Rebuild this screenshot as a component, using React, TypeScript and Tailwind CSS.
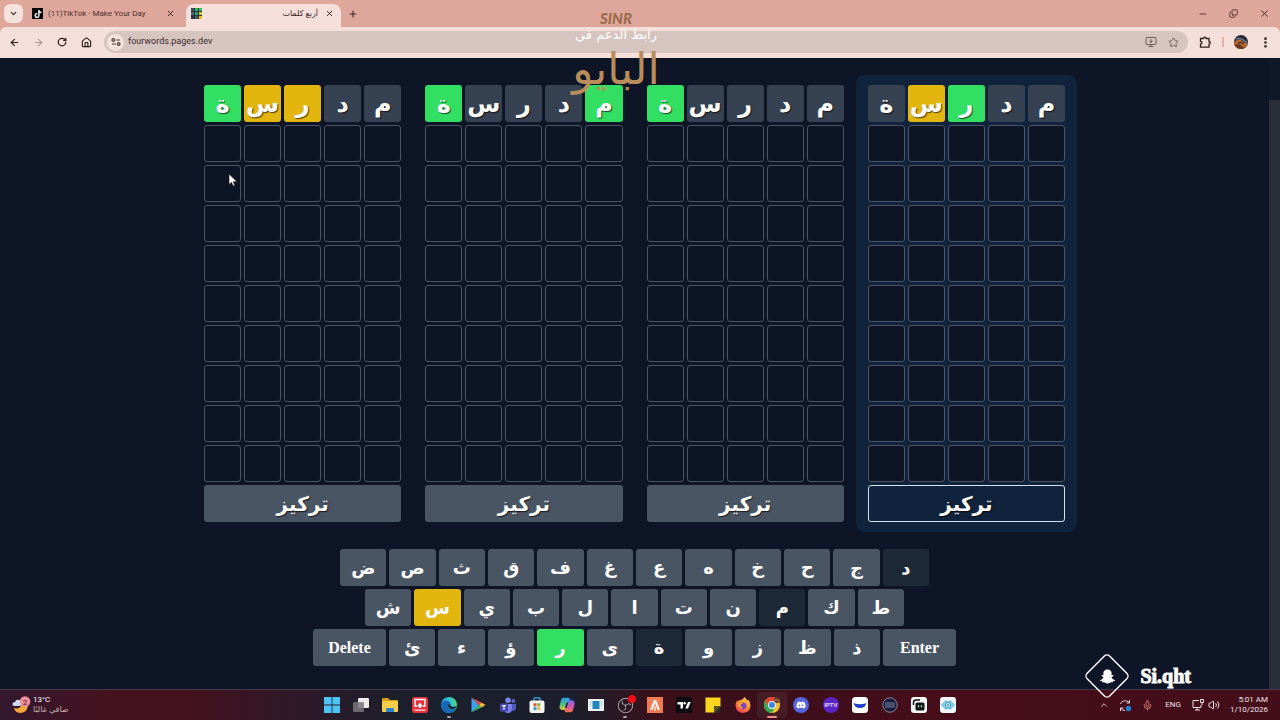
import type { ReactNode } from "react";
import clsx from "clsx";
import {
  ArrowLeft,
  ArrowRight,
  ChevronDown,
  ChevronUp,
  Copy,
  EllipsisVertical,
  House,
  Mic,
  Minus,
  MonitorDown,
  Plus,
  RotateCw,
  Star,
  Volume2,
  X,
} from "lucide-react";
import { FaDiscord, FaSnapchatGhost, FaTiktok } from "react-icons/fa";
import { SiObsstudio } from "react-icons/si";

type State = "correct" | "present" | "absent" | "unused";

const WORD = ["م", "د", "ر", "س", "ة"];
const EMPTY_ROWS = 9;

// Listed from the right, the way the boards are read
const BOARDS: { id: number; active?: boolean; result: State[] }[] = [
  { id: 1, active: true, result: ["absent", "absent", "correct", "present", "absent"] },
  { id: 2, result: ["absent", "absent", "absent", "absent", "correct"] },
  { id: 3, result: ["correct", "absent", "absent", "absent", "correct"] },
  { id: 4, result: ["absent", "absent", "present", "present", "correct"] },
];

const KEY_ROWS = [
  { pad: "px-[27px]", keys: ["د", "ج", "ح", "خ", "ه", "ع", "غ", "ف", "ق", "ث", "ص", "ض"] },
  { pad: "px-[52px]", keys: ["ط", "ك", "م", "ن", "ت", "ا", "ل", "ب", "ي", "س", "ش"] },
  {
    pad: "px-0",
    keys: ["Enter", "ذ", "ظ", "ز", "و", "ة", "ى", "ر", "ؤ", "ء", "ئ", "Delete"],
  },
];

const KEY_STATE: Record<string, State> = {
  د: "absent",
  م: "absent",
  ة: "absent",
  س: "present",
  ر: "correct",
};

const cellColor: Record<State, string> = {
  correct: "bg-[#33df62]",
  present: "bg-[#e2b60f]",
  absent: "bg-[#364152]",
  unused: "border border-[#4a5566] bg-[#0d1424]",
};

const keyColor: Record<State, string> = {
  correct: "bg-[#33df62]",
  present: "bg-[#e2b60f]",
  absent: "bg-[#1e2938]",
  unused: "bg-[#4a5564]",
};

const arabic = "font-['DejaVu_Sans',sans-serif]";
const ui = "font-[Roboto,'DejaVu_Sans',sans-serif]";
const letterShadow = "[text-shadow:1px_1px_1px_#000a]";

function Favicon() {
  return (
    <svg viewBox="0 0 11 11" className="size-[11px] shrink-0" aria-hidden="true">
      <rect width="11" height="11" fill="#26323c" />
      <rect width="3" height="3" fill="#35535c" />
      <rect x="4" width="3" height="3" fill="#2fb56e" />
      <rect x="8" width="3" height="3" fill="#39b96b" />
      <rect y="4" width="3" height="3" fill="#4c6c76" />
      <rect x="4" y="4" width="3" height="3" fill="#25a070" />
      <rect x="8" y="4" width="3" height="3" fill="#d9c52b" />
      <rect x="4" y="8" width="3" height="3" fill="#3e5b64" />
      <rect x="8" y="8" width="3" height="3" fill="#e3bf20" />
    </svg>
  );
}

function IconButton({ label, children }: { label: string; children: ReactNode }) {
  return (
    <button aria-label={label} className="flex h-6 w-6 shrink-0 items-center justify-center">
      {children}
    </button>
  );
}

function TabStrip() {
  return (
    <div className="flex h-[27px] items-end bg-[#dfa69b] pl-1 text-[#3b2320]">
      <button
        aria-label="Search tabs"
        className="mb-1 flex size-[19px] items-center justify-center rounded-md bg-[#f5e2dd]"
      >
        <ChevronDown className="size-[9px]" strokeWidth={3} />
      </button>
      <div className="flex h-[23px] w-[163px] items-center gap-[5px] pb-1 pl-[9px] pr-1">
        <span className="flex size-[11px] shrink-0 items-center justify-center bg-black text-white">
          <FaTiktok className="size-[8px]" />
        </span>
        <span className="min-w-0 flex-1 whitespace-nowrap text-[8px] text-[#4d302c]">
          (11)TikTok - Make Your Day
        </span>
        <button aria-label="Close tab" className="flex h-4 w-6 items-center justify-center">
          <X className="size-[9px]" strokeWidth={2.5} />
        </button>
      </div>
      <div className="flex h-[23px] w-[155px] items-center rounded-t-lg bg-[#f4dfda] pb-1 pl-[5px]">
        <Favicon />
        <span dir="rtl" className="flex-1 whitespace-nowrap text-[8px]">
          أربع كلمات
        </span>
        <button aria-label="Close tab" className="flex h-4 w-[23px] items-center justify-center">
          <X className="size-[9px]" strokeWidth={2.5} />
        </button>
      </div>
      <button aria-label="New tab" className="flex h-[27px] w-6 items-center justify-center">
        <Plus className="size-[10px]" strokeWidth={2.5} />
      </button>
      <div className="ml-auto flex h-[27px] items-center">
        <button aria-label="Minimize" className="flex w-[31px] justify-center">
          <Minus className="size-[10px]" />
        </button>
        <button aria-label="Restore" className="flex w-[31px] justify-center">
          <Copy className="size-[9px] -scale-y-100" />
        </button>
        <button aria-label="Close" className="flex w-[31px] justify-center">
          <X className="size-[11px]" />
        </button>
      </div>
    </div>
  );
}

function Toolbar() {
  return (
    <div className="flex h-[31px] items-center rounded-t-md bg-[#f4dfda] pb-px pl-0.5 pr-[3px] text-[#2f1f1d]">
      <IconButton label="Back">
        <ArrowLeft className="size-[11px]" strokeWidth={2.5} />
      </IconButton>
      <IconButton label="Forward">
        <ArrowRight className="size-[11px] text-[#ae9a96]" strokeWidth={2.5} />
      </IconButton>
      <IconButton label="Reload">
        <RotateCw className="size-[10px]" strokeWidth={3} />
      </IconButton>
      <IconButton label="Home">
        <House className="size-[11px]" strokeWidth={2.5} />
      </IconButton>
      <div className="ml-1.5 mr-[5px] flex h-[22px] flex-1 items-center rounded-full bg-[#d6c4c0] pl-[3px] pr-1">
        <button
          aria-label="Site information"
          className="flex size-[17px] items-center justify-center rounded-full bg-[#f2e1dd]"
        >
          <svg viewBox="0 0 10 8" className="w-[10px]" fill="none" stroke="#4b3b39" strokeWidth="1.2">
            <circle cx="2.3" cy="2" r="1.3" />
            <path d="M5 2h4M1 6h4" />
            <circle cx="7.7" cy="6" r="1.3" />
          </svg>
        </button>
        <input
          aria-label="Address"
          defaultValue="fourwords.pages.dev"
          className="min-w-0 flex-1 bg-transparent pl-1 text-[9px] text-[#3b2b29] outline-none"
        />
        <button aria-label="Install app" className="flex w-[22px] justify-center text-[#6d5b58]">
          <MonitorDown className="size-[12px]" />
        </button>
        <button aria-label="Bookmark" className="flex w-[22px] justify-center text-[#6d5b58]">
          <Star className="size-[11px]" />
        </button>
      </div>
      <IconButton label="Extensions">
        <svg viewBox="0 0 12 12" className="size-[12px]" fill="none" stroke="currentColor" strokeWidth="1.3">
          <path d="M1.500 2.500h3a1.300 1.300 0 0 1 2.600 0H10v3a1.300 1.300 0 0 1 0 2.600v3H1.500V8.200a1.400 1.400 0 0 0 0-2.800z" />
        </svg>
      </IconButton>
      <span className="mx-[5px] h-[10px] w-0.5 bg-[#e3b3aa]" />
      <IconButton label="Profile">
        <svg viewBox="0 0 14 14" className="size-[14px] overflow-hidden rounded-full">
          <rect width="14" height="14" fill="#2b2a33" />
          <path d="M0 7q5-4 8-1t6 2v6H0z" fill="#b26a35" />
          <path d="M2 4q5-2 11 4" stroke="#6f7d92" strokeWidth="1.5" fill="none" />
          <path d="M4 8q3-1.500 6 1" stroke="#2a1c1c" strokeWidth="1" fill="none" />
          <path d="M0 10q6-2 8 1t5 0v3H0z" fill="#6b3722" />
        </svg>
      </IconButton>
      <IconButton label="Menu">
        <EllipsisVertical className="size-[13px]" strokeWidth={3} />
      </IconButton>
    </div>
  );
}

function Board({ result, active }: { result: State[]; active?: boolean }) {
  return (
    <section className={clsx("flex-1 rounded-lg px-3 py-[10px]", active && "bg-[#11223d]")}>
      <div className="grid grid-cols-5 gap-[3px]">
        {WORD.map((letter, i) => (
          <div
            key={i}
            className={clsx(
              "flex h-[37px] items-center justify-center rounded-[3px] text-2xl leading-6 font-bold text-white",
              letterShadow,
              cellColor[result[i]]
            )}
          >
            {letter}
          </div>
        ))}
        {Array.from({ length: EMPTY_ROWS * 5 }, (_, i) => (
          <div key={i} className={clsx("h-[37px] rounded-[3px]", cellColor.unused)} />
        ))}
      </div>
      <button
        className={clsx(
          "mt-[3px] flex h-[37px] w-full items-center justify-center rounded-[3px] text-xl font-bold text-white",
          letterShadow,
          active ? "border border-[#d3e2f0] bg-[#11223d]" : "bg-[#4a5564]"
        )}
      >
        تركيز
      </button>
    </section>
  );
}

function Keyboard() {
  return (
    <div className="mx-auto mt-[17px] flex w-full max-w-[643px] flex-col gap-[3px]">
      {KEY_ROWS.map((row) => (
        <div key={row.pad} className={clsx("flex gap-[3px]", row.pad)}>
          {row.keys.map((key) => (
            <button
              key={key}
              className={clsx(
                "flex h-[37px] items-center justify-center rounded-[3px] font-bold text-white",
                key.length > 1
                  ? "w-[73px] font-['Liberation_Serif',serif] text-base"
                  : "flex-1 text-lg",
                keyColor[KEY_STATE[key] ?? "unused"]
              )}
            >
              {key}
            </button>
          ))}
        </div>
      ))}
    </div>
  );
}

function Watermark() {
  return (
    <div
      className={clsx(
        "pointer-events-none absolute left-[566px] top-[10px] flex w-[100px] flex-col items-center whitespace-nowrap",
        arabic
      )}
    >
      <span className="font-['Lato',sans-serif] text-[15px] font-black italic leading-4 text-[#9b6b4b]">
        SINR
      </span>
      <span dir="rtl" className="text-[13px] leading-[18px] text-white">
        رابط الدعم في
      </span>
      <span dir="rtl" className="text-[44px] leading-[50px] text-[#b88d5b]">
        البايو
      </span>
    </div>
  );
}

function SnapTag() {
  return (
    <div className="pointer-events-none absolute bottom-[21px] right-[89px] flex items-center gap-2.5 text-white">
      <span className="relative flex size-[46px] items-center justify-center">
        <svg viewBox="0 0 46 46" className="absolute inset-0" fill="none" stroke="white" strokeWidth="1.4">
          <rect x="7" y="7" width="32" height="32" rx="4" transform="rotate(45 23 23)" />
        </svg>
        <FaSnapchatGhost className="size-[15px]" />
      </span>
      <span className="font-['Liberation_Serif',serif] text-xl font-bold [-webkit-text-stroke:1px_white]">
        Si.qht
      </span>
    </div>
  );
}

function Glyph({ children }: { children: ReactNode }) {
  return (
    <svg viewBox="0 0 16 16" className="size-4">
      {children}
    </svg>
  );
}

const APPS: { name: string; icon: ReactNode; open?: boolean; focused?: boolean }[] = [
  {
    name: "Start",
    icon: (
      <Glyph>
        <path d="M0 0h7.6v7.6H0zM8.4 0H16v7.6H8.4zM0 8.4h7.6V16H0zM8.4 8.4H16V16H8.4z" fill="#4cc3f5" />
      </Glyph>
    ),
  },
  {
    name: "Task view",
    icon: (
      <Glyph>
        <rect x="5" y="1" width="11" height="10" rx="1" fill="#ececef" />
        <rect y="5" width="11" height="10" rx="1" fill="#77777c" opacity=".85" />
      </Glyph>
    ),
  },
  {
    name: "File Explorer",
    icon: (
      <Glyph>
        <path d="M0 2q0-1 1-1h5l2 2h7q1 0 1 1v4H0z" fill="#d99a1c" />
        <rect y="4" width="16" height="11" rx="1" fill="#f9cf4a" />
        <path d="M4 15v-3q0-1 1-1h6q1 0 1 1v3z" fill="#2b83cf" />
      </Glyph>
    ),
  },
  {
    name: "Screen recorder",
    icon: (
      <Glyph>
        <rect width="16" height="16" rx="2.5" fill="#e5323f" />
        <path d="M5 9H3V2.500h10V9h-2" fill="none" stroke="white" strokeWidth="1.4" />
        <path d="M8 5.500l3 4H9V11H7V9.500H5z" fill="white" />
        <path d="M2.500 13.200h11" stroke="#ffc6c6" strokeWidth="1.5" />
      </Glyph>
    ),
  },
  {
    name: "Edge",
    open: true,
    icon: (
      <Glyph>
        <defs>
          <linearGradient id="edgeTop" x1="0" x2="1" y1=".5" y2="0.2">
            <stop offset="0" stopColor="#249de6" />
            <stop offset=".6" stopColor="#2fc4cf" />
            <stop offset="1" stopColor="#5edb6b" />
          </linearGradient>
        </defs>
        <circle cx="8" cy="8" r="8" fill="url(#edgeTop)" />
        <path d="M0 8q1-4.500 5.500-4.500Q9 4 9.500 7q-2-.5-2.500 1.500Q7 11.500 11 12q2.500 0 4-1.500Q13 16 8 16 0 15.500 0 8z" fill="#1667b7" />
        <path d="M9.500 7q-2.300-.3-2.500 1.500.3 3 4 3.500 2.500 0 4-1.500l.8-1.500q-1.800 1-4.300.7Q8.700 9 9.500 7z" fill="#1c2431" />
      </Glyph>
    ),
  },
  {
    name: "Google Play",
    icon: (
      <Glyph>
        <path d="M1.500 .8L9 8l-7.500 7.200z" fill="#3fa1f2" />
        <path d="M1.500 .8L11.500 5.600 9 8z" fill="#e94a43" />
        <path d="M1.500 15.200L9 8l2.500 2.400z" fill="#3ebd63" />
        <path d="M11.500 5.600L15.500 8l-4 2.400L9 8z" fill="#f7bf30" />
      </Glyph>
    ),
  },
  {
    name: "Teams",
    icon: (
      <Glyph>
        <circle cx="8" cy="3.200" r="2.800" fill="#7c83ea" />
        <circle cx="13.300" cy="4" r="2" fill="#5c63cf" />
        <path d="M4 7h8v5q0 4-4 4t-4-4z" fill="#7b7fe6" />
        <path d="M12 7h4v4q0 3-4 3z" fill="#5158c2" />
        <rect y="6.500" width="8" height="8" rx="1" fill="#4648b4" />
        <path d="M2.200 8.700h3.600M4 8.700v4" stroke="white" strokeWidth="1.200" />
      </Glyph>
    ),
  },
  {
    name: "Microsoft Store",
    icon: (
      <Glyph>
        <path d="M5 5V1.500q0-.7.7-.7h4.600q.7 0 .7.7V5" fill="none" stroke="#3aa7e8" strokeWidth="1.300" />
        <rect x=".5" y="3.500" width="15" height="12.500" rx="2" fill="#f4f4f6" />
        <path d="M4.500 6.300h3v3h-3z" fill="#e8502f" />
        <path d="M8.300 6.300h3v3h-3z" fill="#79b82e" />
        <path d="M4.500 10.100h3v3h-3z" fill="#2f9fe4" />
        <path d="M8.300 10.100h3v3h-3z" fill="#f5b92d" />
      </Glyph>
    ),
  },
  {
    name: "Copilot",
    icon: (
      <Glyph>
        <defs>
          <linearGradient id="copilotLeft" x1="0" x2="0" y1="0" y2="1">
            <stop offset="0" stopColor="#2c9be8" />
            <stop offset=".55" stopColor="#48c07a" />
            <stop offset="1" stopColor="#eec33a" />
          </linearGradient>
          <linearGradient id="copilotRight" x1="0" x2="0" y1="0" y2="1">
            <stop offset="0" stopColor="#6a6cf0" />
            <stop offset=".5" stopColor="#d457b0" />
            <stop offset="1" stopColor="#f4734a" />
          </linearGradient>
        </defs>
        <path d="M4.500 .8h5q1.700 0 1.200 1.800L7.500 11.500q-.5 1.500-2 1.500H3Q0 12.500 .6 9L2 3q.5-2.200 2.500-2.200z" fill="url(#copilotLeft)" />
        <path d="M9.500 .8q1.700 0 2.200 1.700L12 3.500h-1.500z" fill="#3a5ae0" />
        <path d="M13 3.300q3 .3 2.500 4L14 13q-.6 2.200-2.500 2.200H7q-1.700 0-1.200-1.700L8.600 5q.6-1.700 2.200-1.700z" fill="url(#copilotRight)" />
        <path d="M8.500 5.500l-1.800 5.500" stroke="#241a2c" strokeWidth="1.400" />
      </Glyph>
    ),
  },
  {
    name: "Media viewer",
    icon: (
      <Glyph>
        <rect y="2" width="16" height="12" fill="#eef3f6" />
        <rect x="4.500" y="4" width="7" height="8" fill="#1f87bd" />
        <path d="M2.500 4v6M13.500 4v6" stroke="#c6d4dc" strokeWidth="1.500" />
      </Glyph>
    ),
  },
  {
    name: "OBS Studio",
    open: true,
    icon: (
      <span className="relative flex size-4 items-center justify-center text-[#cfcfd2]">
        <SiObsstudio className="size-[15px]" />
        <span className="absolute -right-[3px] -top-0.5 size-2 rounded-full bg-[#f40b16]" />
      </span>
    ),
  },
  {
    name: "Launcher",
    icon: (
      <Glyph>
        <rect width="16" height="16" fill="#f07b52" />
        <path d="M3 13L6.800 3h2.400L13 13h-2.500L8 6l-2.500 7z" fill="#fff0e8" />
        <path d="M8 9v5" stroke="#fff0e8" strokeWidth="1.300" />
      </Glyph>
    ),
  },
  {
    name: "TradingView",
    icon: (
      <Glyph>
        <rect width="16" height="16" rx="1.500" fill="#0c0c0f" />
        <path d="M1.500 5h5.500v6.500H4.500V7.500h-3z" fill="white" />
        <circle cx="8.700" cy="6.200" r="1.200" fill="white" />
        <path d="M12 5h2.800l-2.800 6.500H9.300z" fill="white" />
      </Glyph>
    ),
  },
  {
    name: "Sticky Notes",
    icon: (
      <Glyph>
        <path d="M.5 .5h15v9L9.500 15.500h-9z" fill="#fbd51d" />
        <path d="M15.500 9l-6.500 6.500V9z" fill="#54501f" />
        <path d="M15.500 9v6.500H9z" fill="#2e2a23" />
      </Glyph>
    ),
  },
  {
    name: "Firefox",
    icon: (
      <Glyph>
        <defs>
          <linearGradient id="fox" x1=".8" x2=".2" y1="0" y2="1">
            <stop offset="0" stopColor="#ffda3c" />
            <stop offset=".5" stopColor="#ff8a2b" />
            <stop offset="1" stopColor="#f0335e" />
          </linearGradient>
        </defs>
        <path d="M9.500 0q2 1.500 2.500 3.500l1-1q2.500 2.500 2.500 6-.5 7-7.500 7.500-7-.5-7.500-7.500 0-3 2-5.500l.3 1.500Q4.500 2.500 6 3q2-.5 3.500-3z" fill="url(#fox)" />
        <circle cx="8" cy="8.800" r="3.400" fill="#7b43c9" />
        <path d="M3 6q3-2 5 .5-2.500 0-2.500 2 .5 2 3 2-3 2-5-.5Q2.500 8 3 6z" fill="#ffa02c" />
      </Glyph>
    ),
  },
  {
    name: "Chrome",
    open: true,
    focused: true,
    icon: (
      <Glyph>
        <circle cx="8" cy="8" r="8" fill="#f5c32c" />
        <path d="M1.100 4A8 8 0 0 1 14.900 4L15 4.500H8L4.500 10z" fill="#e24435" />
        <path d="M1.100 4A8 8 0 0 0 7.500 16L11.500 10 8 11.500 4.500 10z" fill="#32a753" />
        <circle cx="8" cy="8" r="3.900" fill="white" />
        <circle cx="8" cy="8" r="3" fill="#3b82ec" />
        <circle cx="13" cy="3" r="3" fill="#5b3a2e" />
        <path d="M10.500 3.500q2.500-1.500 5 .8" stroke="#bf7b45" strokeWidth="1.200" fill="none" />
      </Glyph>
    ),
  },
  {
    name: "Discord",
    icon: (
      <span className="flex size-4 items-center justify-center rounded-full bg-[#5563dd] text-white">
        <FaDiscord className="size-[10px]" />
      </span>
    ),
  },
  {
    name: "IPTV",
    icon: (
      <span className="flex size-4 items-center justify-center rounded-full bg-[#5a23c4] text-[6px] font-bold leading-none text-[#e4d8ff]">
        IPTV
      </span>
    ),
  },
  {
    name: "Smile",
    icon: (
      <Glyph>
        <rect width="16" height="16" rx="3.500" fill="white" />
        <path d="M1.500 5.500q1 1.500 6.500 1.700 5.500-.2 6.500-1.700Q13.500 11 8 11T1.500 5.500z" fill="#1e3fd0" />
      </Glyph>
    ),
  },
  {
    name: "Radio",
    icon: (
      <Glyph>
        <circle cx="8" cy="8" r="7.200" fill="#151b38" stroke="#8b8796" strokeWidth="1" />
        <path d="M3 6h10M3 8h10M3 10h10" stroke="#7c86a6" strokeWidth="1.200" />
      </Glyph>
    ),
  },
  {
    name: "Stream bot",
    icon: (
      <Glyph>
        <rect width="16" height="16" rx="3" fill="#f7faf9" />
        <rect x="4.500" y="5.500" width="9" height="8" rx="1.500" fill="#111" />
        <path d="M2.500 8V5.500q0-2.500 2.500-2.500h4" fill="none" stroke="#111" strokeWidth="1.500" />
        <path d="M7.500 8v2.500M10.500 8v2.500" stroke="#5ce0b8" strokeWidth="1.200" />
      </Glyph>
    ),
  },
  {
    name: "Remote",
    icon: (
      <Glyph>
        <rect width="16" height="16" rx="3" fill="#eef8fd" />
        <path d="M1.500 8L6 3.500 8 5.500 10 3.500 14.500 8 10 12.500 8 10.500 6 12.500z" fill="#8ed3ee" stroke="#3aa4d3" strokeWidth=".8" />
        <circle cx="8" cy="8" r="2.600" fill="#dff4fc" stroke="#2e8fc2" strokeWidth="1" />
        <circle cx="8" cy="8" r="1" fill="#2e8fc2" />
      </Glyph>
    ),
  },
];

function Taskbar() {
  return (
    <footer className="grid h-[31px] shrink-0 grid-cols-[1fr_646px_1fr] border-t border-[#443848] bg-[linear-gradient(90deg,#33182e_0%,#46111f_9%,#43111f_15%,#2a1a29_25%,#1a202c_33%,#1c1f2b_45%,#3c1019_52%,#3a101c_58%,#470d1a_75%,#430d1a_100%)] text-white">
      <button className="flex items-center gap-0.5 pl-3 text-left">
        <svg viewBox="0 0 19 19" className="size-[19px]">
          <path d="M10 7q5 2 6-2 1 11-7 12-6 0-7-5 7 2 8-5z" fill="#f5a73a" />
          <path d="M2 10q-2-.5-1.500-2.500Q1 6 3 6q1-3 4-2 3 0 3 3 0 3-3 3z" fill="#cfdcf5" />
          <circle cx="13" cy="5.500" r="5.300" fill="#f08f9c" />
          <text x="13" y="8.500" fontSize="8" textAnchor="middle" fill="#3a1520">
            2
          </text>
        </svg>
        <span className="flex flex-col text-[8px] leading-[10px]">
          <span>13°C</span>
          <span dir="rtl" className="text-[#c4aab0]">
            صافي غالبًا
          </span>
        </span>
      </button>
      <nav className="flex" aria-label="Apps">
        {APPS.map((app) => (
          <button
            key={app.name}
            aria-label={app.name}
            className={clsx(
              "relative my-0.5 flex flex-1 items-center justify-center rounded",
              app.focused && "bg-white/5"
            )}
          >
            {app.icon}
            {app.open && (
              <span
                className={clsx(
                  "absolute bottom-0 h-0.5 rounded-full",
                  app.focused ? "w-[10px] bg-[#ee8f87]" : "w-1 bg-[#a9a2a8]"
                )}
              />
            )}
          </button>
        ))}
      </nav>
      <div className="flex items-center justify-end pr-3 text-[#f1e3e6]">
        <button aria-label="Hidden icons" className="flex w-[22px] justify-center">
          <ChevronUp className="size-[10px]" />
        </button>
        <button aria-label="Sync" className="flex w-[21px] justify-center">
          <svg viewBox="0 0 13 13" className="size-[13px]" fill="none" stroke="#e5d3d7">
            <path d="M1.500 5A5 5 0 0 1 10 3.500M10.500 1v3h-3M1.500 12V9h3M2 9.500Q3.500 11.500 6 11.500" />
            <circle cx="9.500" cy="9.500" r="2.700" fill="#1c84d6" stroke="none" />
          </svg>
        </button>
        <button aria-label="Microphone" className="flex w-[22px] justify-center text-[#e07f72]">
          <Mic className="size-[11px]" />
        </button>
        <button className="w-[30px] text-center text-[8px]">ENG</button>
        <button aria-label="Network and volume" className="flex w-[32px] items-center justify-end gap-1">
          <svg viewBox="0 0 12 12" className="size-[12px]" fill="none" stroke="currentColor">
            <path d="M7 1.500H1v7h8V6M3 11h5M5 8.500V11M8.500 .5h3v3h-3zM10 3.500V6" />
          </svg>
          <Volume2 className="size-[12px]" />
        </button>
        <time className="w-[48px] text-right text-[8px] leading-[10px]">
          5:01 AM
          <br />
          1/10/2026
        </time>
      </div>
    </footer>
  );
}

export default function App() {
  return (
    <div className={clsx("relative flex min-h-screen flex-col bg-[#0e1526]", ui)}>
      <header className="bg-[#dfa69b]">
        <TabStrip />
        <Toolbar />
      </header>
      <div className="flex flex-1">
        <main dir="rtl" className={clsx("flex-1 pt-[17px]", arabic)}>
          <div className="mx-auto flex w-full max-w-[885px]">
            {BOARDS.map((board) => (
              <Board key={board.id} result={board.result} active={board.active} />
            ))}
          </div>
          <Keyboard />
        </main>
        <div className="flex w-[11px] flex-col bg-[#0f1829] pt-[42px]">
          <div className="flex-1 bg-[#2b2e39]" />
        </div>
      </div>
      <Taskbar />
      <Watermark />
      <SnapTag />
      <svg viewBox="0 0 10 14" className="pointer-events-none absolute left-[228px] top-[173px] w-[10px]">
        <path d="M1 1v10.500l2.500-2.200 1.600 3.700 1.800-.8-1.600-3.500H9z" fill="white" stroke="#111" strokeWidth=".6" />
      </svg>
    </div>
  );
}
